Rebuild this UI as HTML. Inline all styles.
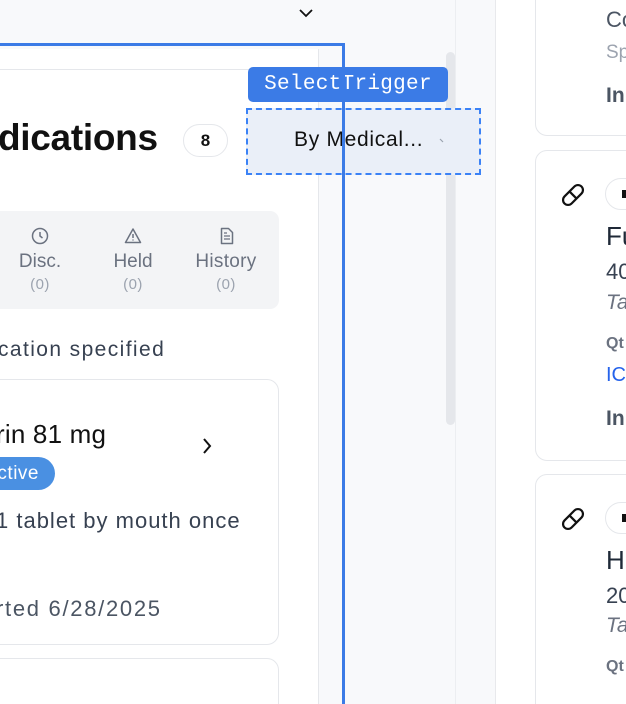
<!DOCTYPE html>
<html><head><style>
*{box-sizing:border-box;margin:0;padding:0}
html,body{width:626px;height:704px;overflow:hidden}
body{position:relative;background:#fff;font-family:"Liberation Sans",sans-serif;color:#111}
.abs{position:absolute}
.card{position:absolute;border:1px solid #e5e7eb;border-radius:12px;background:#fff}
.gray{color:#4b5563}
</style></head><body>
<div class="abs" style="left:0;top:0;width:495px;height:704px;background:#f8f9fb"></div>
<div class="abs" style="left:495px;top:0;width:1px;height:704px;background:#e8e9ec"></div>
<div class="abs" style="left:446px;top:52px;width:9px;height:373px;background:#e5e7eb;border-radius:5px"></div>
<div class="abs" style="left:455px;top:0;width:1px;height:704px;background:#eceef1"></div>
<svg class="abs" style="left:298px;top:7px" width="16" height="12" viewBox="0 0 16 12"><path d="M2 3l6 6 6-6" fill="none" stroke="#111" stroke-width="1.8"/></svg>
<div class="abs" style="left:0;top:49px;width:319px;height:655px;background:#fff;border-right:1px solid #e5e7eb"></div>
<div class="abs" style="left:0;top:69px;width:318px;height:1px;background:#e5e7eb"></div>
<div class="abs" style="left:-2px;top:117px;font-size:37px;font-weight:bold;letter-spacing:-0.3px">dications</div>
<div class="abs" style="left:183px;top:124px;width:45px;height:33px;border:1px solid #e5e7eb;border-radius:17px;text-align:center;line-height:31px;font-size:17px;font-weight:bold">8</div>
<div class="abs" style="left:-10px;top:211px;width:289px;height:98px;background:#f3f4f6;border-radius:9px"></div>
<svg class="abs" style="left:31px;top:227px" width="18" height="18" viewBox="0 0 18 18"><circle cx="9" cy="9" r="7.5" fill="none" stroke="#6b7280" stroke-width="1.5"/><path d="M9 5v4l2.5 2" fill="none" stroke="#6b7280" stroke-width="1.5"/></svg>
<svg class="abs" style="left:124px;top:227px" width="18" height="18" viewBox="0 0 18 18"><path d="M9 2L1.5 15.5h15z" fill="none" stroke="#6b7280" stroke-width="1.5" stroke-linejoin="round"/><path d="M9 7v4M9 12.5v1" stroke="#6b7280" stroke-width="1.5"/></svg>
<svg class="abs" style="left:218px;top:227px" width="18" height="18" viewBox="0 0 18 18"><path d="M3.5 1.5h7l4 4v11h-11z" fill="none" stroke="#6b7280" stroke-width="1.5" stroke-linejoin="round"/><path d="M6 9h6M6 12h6M6 6h3" stroke="#6b7280" stroke-width="1.3"/></svg>
<div class="abs" style="left:0;top:251px;width:80px;text-align:center;font-size:19px;color:#6b7280">Disc.</div>
<div class="abs" style="left:0;top:276px;width:80px;text-align:center;font-size:15px;color:#9ca3af;letter-spacing:0.5px">(0)</div>
<div class="abs" style="left:93px;top:251px;width:80px;text-align:center;font-size:19px;color:#6b7280">Held</div>
<div class="abs" style="left:93px;top:276px;width:80px;text-align:center;font-size:15px;color:#9ca3af;letter-spacing:0.5px">(0)</div>
<div class="abs" style="left:186px;top:251px;width:80px;text-align:center;font-size:19px;color:#6b7280;letter-spacing:0.3px">History</div>
<div class="abs" style="left:186px;top:276px;width:80px;text-align:center;font-size:15px;color:#9ca3af;letter-spacing:0.5px">(0)</div>
<div class="abs" style="left:-2px;top:338px;font-size:21px;color:#374151;letter-spacing:1.4px">cation specified</div>
<div class="card" style="left:-20px;top:379px;width:299px;height:266px"></div>
<div class="abs" style="left:-4px;top:419px;font-size:26px;letter-spacing:0.2px">rin 81 mg</div>
<svg class="abs" style="left:200px;top:437px" width="14" height="18" viewBox="0 0 14 18"><path d="M4 2l6 7-6 7" fill="none" stroke="#111" stroke-width="2"/></svg>
<div class="abs" style="left:-30px;top:457px;width:85px;height:33px;background:#4a90e2;border-radius:17px;color:#fff;font-size:19px;line-height:33px;text-align:right;padding-right:16px;letter-spacing:0.5px">ctive</div>
<div class="abs" style="left:-4px;top:508px;font-size:22px;color:#374151;letter-spacing:1px">1 tablet by mouth once</div>
<div class="abs" style="left:-4px;top:596px;font-size:22px;color:#4b5563;letter-spacing:1.7px">rted 6/28/2025</div>
<div class="card" style="left:-20px;top:658px;width:299px;height:80px"></div>
<div class="abs" style="left:246px;top:108px;width:235px;height:67px;background:#eaeff8;border:2.5px dashed #3b82f6"></div>
<div class="abs" style="left:294px;top:128px;font-size:21px;letter-spacing:0.7px">By Medical...</div>
<svg class="abs" style="left:439px;top:137px" width="8" height="8" viewBox="0 0 8 8"><path d="M1 2l3 3" stroke="#9ca3af" stroke-width="1.2"/></svg>
<div class="abs" style="left:248px;top:67px;width:200px;height:35px;background:#3b7be6;border-radius:5px;color:#fff;font-family:'Liberation Mono',monospace;font-size:21px;line-height:35px;text-align:center;letter-spacing:0.3px">SelectTrigger</div>
<div class="abs" style="left:0;top:43px;width:345px;height:3px;background:#3b7be6"></div>
<div class="abs" style="left:342px;top:43px;width:3px;height:661px;background:#3b7be6"></div>
<div class="abs" style="left:496px;top:0;width:130px;height:704px;background:#fff"></div>
<div class="card" style="left:535px;top:-20px;width:120px;height:156px"></div>
<div class="abs gray" style="left:606px;top:7px;font-size:22px">Co</div>
<div class="abs" style="left:606px;top:42px;font-size:19px;color:#9ca3af">Sp</div>
<div class="abs gray" style="left:606px;top:84px;font-size:21px;font-weight:bold">In</div>
<div class="card" style="left:535px;top:150px;width:120px;height:311px"></div>
<div class="card" style="left:535px;top:474px;width:120px;height:260px"></div>
<svg class="abs" style="left:559px;top:181px" width="28" height="28" viewBox="0 0 28 28"><g transform="rotate(-45 14 14)"><rect x="2" y="9" width="24" height="10" rx="5" fill="none" stroke="#111" stroke-width="2.2"/><path d="M14 9v10" stroke="#111" stroke-width="2.2"/></g></svg>
<svg class="abs" style="left:559px;top:505px" width="28" height="28" viewBox="0 0 28 28"><g transform="rotate(-45 14 14)"><rect x="2" y="9" width="24" height="10" rx="5" fill="none" stroke="#111" stroke-width="2.2"/><path d="M14 9v10" stroke="#111" stroke-width="2.2"/></g></svg>
<div class="abs" style="left:605px;top:178px;width:40px;height:32px;border:1px solid #e5e7eb;border-radius:16px"></div>
<div class="abs" style="left:622px;top:190px;width:4px;height:8px;background:#111"></div>
<div class="abs" style="left:605px;top:502px;width:40px;height:32px;border:1px solid #e5e7eb;border-radius:16px"></div>
<div class="abs" style="left:622px;top:514px;width:4px;height:8px;background:#111"></div>
<div class="abs" style="left:606px;top:221px;font-size:26px;color:#1f2937">Fu</div>
<div class="abs" style="left:606px;top:259px;font-size:22px;color:#374151">40</div>
<div class="abs" style="left:606px;top:291px;font-size:21px;color:#6b7280;font-style:italic">Ta</div>
<div class="abs" style="left:606px;top:335px;font-size:16px;color:#6b7280;font-weight:bold">Qt</div>
<div class="abs" style="left:606px;top:364px;font-size:20px;color:#2563eb">IC</div>
<div class="abs gray" style="left:606px;top:407px;font-size:21px;font-weight:bold">In</div>
<div class="abs" style="left:606px;top:545px;font-size:26px;color:#1f2937">H</div>
<div class="abs" style="left:606px;top:583px;font-size:22px;color:#374151">20</div>
<div class="abs" style="left:606px;top:614px;font-size:21px;color:#6b7280;font-style:italic">Ta</div>
<div class="abs" style="left:606px;top:658px;font-size:16px;color:#6b7280;font-weight:bold">Qt</div>
</body></html>
